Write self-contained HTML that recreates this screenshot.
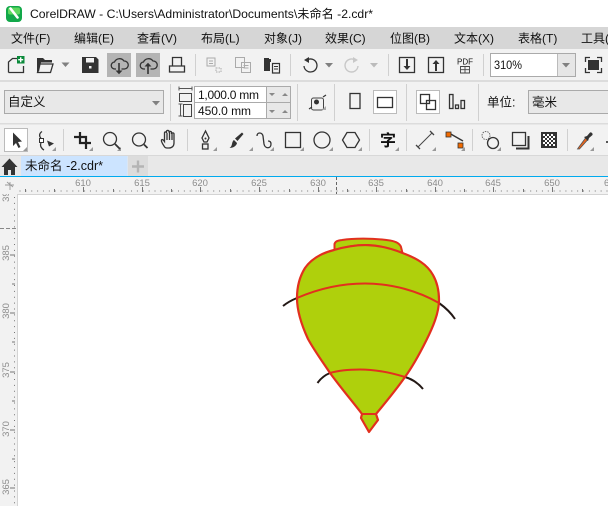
<!DOCTYPE html>
<html><head><meta charset="utf-8"><style>
html,body{margin:0;padding:0;width:608px;height:506px;overflow:hidden;background:#fff}
svg{position:absolute;left:0;top:0;display:block}
text{font-family:"Liberation Sans","Noto Sans CJK SC",sans-serif;fill:#111;font-size:12px}
.m{font-size:12px}
.r{font-size:9.5px;fill:#8c8c8c;text-anchor:middle}
.i{fill:none;stroke:#333;stroke-width:1.3}
.f{fill:#333;stroke:none}
.g{fill:none;stroke:#aaa;stroke-width:1}
.s{stroke:#d0d0d0;stroke-width:1}
</style></head><body>
<svg width="608" height="506" viewBox="0 0 608 506" shape-rendering="geometricPrecision">
<defs><clipPath id="vc"><rect x="0" y="194" width="17" height="312"/></clipPath></defs>
<rect width="608" height="27" fill="#fff"/>
<rect y="27" width="608" height="22" fill="#d6d6d6"/>
<rect y="49" width="608" height="31" fill="#f2f2f2"/>
<rect y="80" width="608" height="2" fill="#dcdcdc"/>
<rect y="82" width="608" height="41" fill="#f2f2f2"/>
<rect y="123" width="608" height="1.5" fill="#dcdcdc"/>
<rect y="124.5" width="608" height="30.5" fill="#f2f2f2"/>
<rect y="155" width="608" height="21" fill="#e8e8e8"/>
<rect y="155" width="608" height="1" fill="#d8d8d8"/>
<rect y="176" width="608" height="1.2" fill="#00aaee"/>
<rect y="177" width="608" height="17" fill="#f2f2f2"/>
<rect y="177" width="17" height="329" fill="#f2f2f2"/>
<rect x="17" y="194" width="591" height="1" fill="#d4d4d4"/>
<rect x="17" y="194" width="1" height="312" fill="#d4d4d4"/>

<!-- logo -->
<rect x="6" y="6" width="16" height="16" rx="4" fill="#12a84a"/>
<rect x="8" y="7.5" width="12" height="7" rx="2" fill="#5fd85f"/>
<path d="M10.5 8.500L17.500 17.500" stroke="#fff" stroke-width="2.600" stroke-linecap="round"/>
<text x="30" y="18" textLength="343" lengthAdjust="spacingAndGlyphs">CorelDRAW - C:\Users\Administrator\Documents\未命名 -2.cdr*</text>

<!-- menu -->
<text class="m" x="11" y="42.500">文件(F)</text>
<text class="m" x="74" y="42.500">编辑(E)</text>
<text class="m" x="137" y="42.500">查看(V)</text>
<text class="m" x="201" y="42.500">布局(L)</text>
<text class="m" x="264" y="42.500">对象(J)</text>
<text class="m" x="325" y="42.500">效果(C)</text>
<text class="m" x="390" y="42.500">位图(B)</text>
<text class="m" x="454" y="42.500">文本(X)</text>
<text class="m" x="518" y="42.500">表格(T)</text>
<text class="m" x="581" y="42.500">工具(O)</text>

<!-- toolbar 1 -->
<path class="i" d="M8.500 72.500V62L12.500 58.500H18M23.500 66V72.500H8.500"/>
<rect x="17" y="56" width="7.500" height="7.500" fill="#0a8a3a"/>
<path d="M20.700 57.200V62.300M18.200 59.700H23.200" stroke="#fff" stroke-width="1.400"/>
<path class="f" d="M37 58h6l2 2h7v2.500h-11l-2 9h-2z"/>
<path class="i" d="M39.500 64H53L50.500 72.500H37.500z"/>
<path d="M61.500 62.500h8l-4 4.500z" fill="#808080"/>
<path class="f" d="M82 57h14l2.500 2.500V73H82z"/>
<rect x="86" y="58" width="8" height="4.500" fill="#f2f2f2"/><rect x="89" y="66" width="2.500" height="2.500" fill="#f2f2f2"/>
<rect x="107" y="53" width="24" height="24" fill="#b4b4b4"/>
<rect x="136" y="53" width="24" height="24" fill="#b4b4b4"/>
<path class="i" d="M116 69h-1a3.500 3.500 0 0 1-.5-7a5.500 5.500 0 0 1 9.500-1a4 4 0 0 1 .5 8h-3"/>
<path class="f" d="M118.200 63h1.600v7.500h2.700l-3.500 3.800-3.500-3.800h2.700z"/>
<path class="i" d="M145 69h-1a3.500 3.500 0 0 1-.5-7a5.500 5.500 0 0 1 9.500-1a4 4 0 0 1 .5 8h-3"/>
<path class="f" d="M147.200 74h1.600v-7.500h2.700l-3.500-3.800-3.500 3.800h2.700z"/>
<path class="i" d="M172.500 66V57.500H181.500V66M169.500 66H184.500V72H169.500z"/>
<line class="s" x1="195.500" y1="54" x2="195.500" y2="76"/>
<path class="g" d="M207 58h8v8h-8zM209 61h4M209 63.500h4"/><path d="M216 68h5v4h-5z" fill="none" stroke="#aaa" stroke-dasharray="1.500 1"/>
<path class="g" d="M235.500 57.500h9v10h-9zM241.500 62.500h9v10h-9zM243.500 65.500h5M243.500 68h5"/>
<path class="f" d="M264 58h5v1h2v3h-1v9h-6z"/><path d="M272.500 63.500h7v9.500h-7z" fill="#f2f2f2" stroke="#333" stroke-width="1.200"/><path d="M274 66.500h4M274 69h4" stroke="#333"/>
<line class="s" x1="290.500" y1="54" x2="290.500" y2="76"/>
<path class="i" d="M307 60a6.500 6.500 0 1 1-3 6" stroke-width="1.400"/><path class="f" d="M304 60l5-3v6z"/>
<path d="M325 63h8l-4 4.500z" fill="#808080"/>
<path d="M355 60a6.500 6.500 0 1 0 3 6" fill="none" stroke="#c8c8c8" stroke-width="1.400"/><path d="M358 60l-5-3v6z" fill="#c8c8c8"/>
<path d="M370 63h8l-4 4.500z" fill="#bbb"/>
<line class="s" x1="388.500" y1="54" x2="388.500" y2="76"/>
<rect class="i" x="399.500" y="57.500" width="15" height="15"/><path class="f" d="M406 59h2v7h2.500l-3.500 4-3.500-4H406z"/>
<rect class="i" x="428.500" y="57.500" width="15" height="15"/><path class="f" d="M435 71h2v-7h2.500l-3.500-4-3.500 4H435z"/>
<text x="457" y="64.500" style="font-size:8px" textLength="16" lengthAdjust="spacingAndGlyphs">PDF</text>
<path d="M460.500 66.500h9v6.500h-9zM465 66.500v6.500M460.500 69.700h9" fill="none" stroke="#444" stroke-width=".9"/>
<line class="s" x1="483.500" y1="54" x2="483.500" y2="76"/>
<rect x="490.500" y="53.500" width="85" height="23" fill="#fff" stroke="#aaa"/>
<rect x="558" y="54" width="17" height="22" fill="#e6e6e6"/><line x1="557.500" y1="54" x2="557.500" y2="76" stroke="#bbb"/>
<path d="M562 63h8l-4 4.500z" fill="#808080"/>
<text x="494" y="69" textLength="28" lengthAdjust="spacingAndGlyphs">310%</text>
<path class="i" d="M585.500 62v-4.500H590M597 57.500h4.500V62M601.500 68v4.500H597M590 72.500h-4.500V68"/>
<rect x="588" y="60" width="11" height="10" class="f"/>

<!-- property bar -->
<rect x="4.500" y="90.500" width="159" height="23" fill="#e8e8e8" stroke="#aaa"/>
<text x="8" y="106" style="font-size:12.500px">自定义</text>
<path d="M152 101h8l-4 4.500z" fill="#808080"/>
<line class="s" x1="170.500" y1="84" x2="170.500" y2="121"/>
<path d="M179 88.500h13M179 86.500v4M192 86.500v4" fill="none" stroke="#555"/>
<rect x="179.500" y="93.500" width="12" height="8" fill="none" stroke="#444"/>
<path d="M180.500 104v12M178.500 104h4M178.500 116h4" fill="none" stroke="#555"/>
<rect x="183.500" y="104.500" width="8" height="12" fill="none" stroke="#444"/>
<rect x="194.500" y="86.500" width="96" height="16" fill="#e8e8e8" stroke="#aaa"/>
<rect x="194.500" y="102.500" width="96" height="16" fill="#e8e8e8" stroke="#aaa"/>
<rect x="194.500" y="86.500" width="72" height="16" fill="#fff" stroke="#aaa"/>
<rect x="194.500" y="102.500" width="72" height="16" fill="#fff" stroke="#aaa"/>
<text x="198" y="99" textLength="61">1,000.0 mm</text>
<text x="198" y="115" textLength="53">450.0 mm</text>
<path d="M269 93h6l-3 3zM282 96h6l-3-3zM269 110h6l-3 3zM282 113h6l-3-3z" fill="#888"/>
<line class="s" x1="297.500" y1="84" x2="297.500" y2="121"/>
<rect x="311.500" y="98" width="12" height="12" fill="none" stroke="#444" rx="2"/>
<circle cx="316.500" cy="102" r="2.500" class="f"/>
<path d="M309 109l3-2M323 97l3-2" stroke="#333" stroke-width="1.200"/>
<path d="M322 110h4v-4z" fill="#aaa"/>
<line class="s" x1="334.500" y1="84" x2="334.500" y2="121"/>
<rect class="i" x="350" y="93.500" width="10" height="15"/>
<rect x="373.500" y="90.500" width="23" height="23" fill="#fff" stroke="#bbb"/>
<rect class="i" x="377.500" y="97.500" width="15" height="10"/>
<line class="s" x1="406.500" y1="84" x2="406.500" y2="121"/>
<rect x="416.500" y="90.500" width="23" height="23" fill="#fff" stroke="#bbb"/>
<rect class="i" x="420.500" y="94.500" width="9" height="9"/><rect class="i" x="426.500" y="100.500" width="9" height="9"/>
<rect x="449.500" y="94.500" width="3.500" height="14" class="i"/><rect x="455.500" y="105" width="3" height="3.500" class="i"/><rect x="461" y="100.500" width="3.500" height="8" class="i"/>
<line class="s" x1="478.500" y1="84" x2="478.500" y2="121"/>
<text x="487" y="106.500" style="font-size:12.500px">单位:</text>
<rect x="528.500" y="90.500" width="90" height="23" fill="#e8e8e8" stroke="#aaa"/>
<text x="532" y="106.500" style="font-size:12.500px">毫米</text>

<!-- toolbox -->
<rect x="4.500" y="128.500" width="23" height="23" fill="#fff" stroke="#bbb"/>
<path class="f" d="M13 132.500l9 9-4 .5 2.500 5-2 1-2.500-5-3 3z"/>
<path d="M27 151v-4l-4 4zM56 151v-4l-4 4zM93 151v-4l-4 4zM121 151v-4l-4 4zM217 151v-4l-4 4zM253 151v-4l-4 4zM274 151v-4l-4 4zM304 151v-4l-4 4zM333 151v-4l-4 4zM362 151v-4l-4 4zM399 151v-4l-4 4zM436 151v-4l-4 4zM465 151v-4l-4 4zM501 151v-4l-4 4zM594 151v-4l-4 4z" fill="#999"/>
<path class="i" d="M42 131.500c-3 2-3 5-1 6.500M41 143c-1.500 3 1 6 3 7"/>
<rect x="39.500" y="138.500" width="4" height="4" fill="#fff" stroke="#333"/>
<path class="f" d="M47 140.500l7 3-5 3z"/>
<line class="s" x1="63.500" y1="129" x2="63.500" y2="151"/>
<path d="M80 132v11h11M74 137h12v12" fill="none" stroke="#222" stroke-width="2.200"/>
<circle class="i" cx="110" cy="139" r="6.500"/><path d="M115 144l5 5" stroke="#333" stroke-width="1.800"/>
<circle class="i" cx="139" cy="139.500" r="6.500"/><path d="M144 144.500l3.500 3.500" stroke="#333" stroke-width="1.800"/>
<path class="i" d="M164 146c-2-3-3-5-2.500-6 .7-1 2 0 3 1.500V133c0-1.500 2-1.500 2 0v-1.500c0-1.500 2.500-1.500 2.500 0v1c0-1.500 2.500-1.500 2.500 0v1.500c0-1.500 2.500-1.500 2.500 0v9c0 3-2 5-5 5h-2c-1.500 0-2.500-1-3-2zM167 133v7M169.500 132v8M172 133v7"/>
<line class="s" x1="187.500" y1="129" x2="187.500" y2="151"/>
<path class="i" d="M205.500 131l-3.500 7 2 4h3l2-4z"/><rect class="i" x="202.500" y="144" width="5.500" height="5"/><circle cx="205.500" cy="138.500" r="1" class="f"/>
<path class="f" d="M242 132.500l1.500 1.500-6 7-2.500-2.500zM234 140l3 3c-.5 3-4 5-7.500 5 1.500-1 2-2 2.500-4 .3-2 1-3.500 2-4z"/>
<path class="i" d="M257 136c0-4 5-4 6 0l1 8c1 5 7 5 7 0 0-2-1-3-3-3" stroke-width="1.600"/>
<rect class="i" x="285.500" y="132.500" width="15" height="15"/>
<circle class="i" cx="322" cy="140" r="8"/>
<path class="i" d="M347 132.500h8l4.500 7.500-4.500 7.500h-8l-4.500-7.500z"/>
<line class="s" x1="369.500" y1="129" x2="369.500" y2="151"/>
<text x="380" y="146" style="font-size:16px;font-weight:bold">字</text>
<line class="s" x1="406.500" y1="129" x2="406.500" y2="151"/>
<path d="M418 147l14-14" stroke="#444" stroke-width="1"/><path d="M416 145l4 4M430 131l4 4" stroke="#444" stroke-width="1.300"/>
<path d="M449 133l14 8" stroke="#333" stroke-width="1.400"/><rect x="446" y="132" width="5" height="5" fill="#f26a00" stroke="#333" stroke-width=".8"/><rect x="458" y="143" width="5" height="5" fill="#f26a00" stroke="#333" stroke-width=".8"/>
<line class="s" x1="472.500" y1="129" x2="472.500" y2="151"/>
<circle cx="486" cy="135.500" r="4" fill="none" stroke="#666" stroke-dasharray="1.500 1"/><circle class="i" cx="493" cy="143" r="5.500"/>
<rect class="i" x="512.500" y="132.500" width="13" height="13"/><path d="M516 148.500h12.500V136" fill="none" stroke="#333" stroke-width="2"/>
<rect x="541" y="132" width="16" height="16" class="f"/>
<path d="M543 134h2v2h-2zM547 134h2v2h-2zM551 134h2v2h-2zM545 136h2v2h-2zM549 136h2v2h-2zM553 136h2v2h-2zM543 138h2v2h-2zM547 138h2v2h-2zM551 138h2v2h-2zM545 140h2v2h-2zM549 140h2v2h-2zM553 140h2v2h-2zM543 142h2v2h-2zM547 142h2v2h-2zM551 142h2v2h-2zM545 144h2v2h-2zM549 144h2v2h-2zM553 144h2v2h-2z" fill="#fff"/>
<line class="s" x1="567.500" y1="129" x2="567.500" y2="151"/>
<path d="M578.500 147.500l-1 1.500 2 0 8-9-2-2z" fill="#e8641c" stroke="#555" stroke-width=".8"/>
<path class="f" d="M584 137l3-1 3-3.500c1.500-.5 3 1 2.500 2.500l-3.500 3-1 3z"/>
<path d="M606 141h2v2h-2z" fill="#555"/>

<!-- tabs -->
<path class="f" d="M9.500 158.500L1.500 167h2.500v8h4v-5h3v5h4v-8h2.500z"/>
<rect x="21" y="156" width="106.500" height="20" fill="#cce4ff"/>
<text x="25" y="170" style="font-size:12.500px" textLength="78">未命名 -2.cdr*</text>
<rect x="128" y="156" width="20" height="20" fill="#dcdcdc"/>
<path d="M132 166.500h12M138 160.500v12" stroke="#b4b4b4" stroke-width="2.400"/>

<!-- ruler -->
<text class="r" x="83" y="186">610</text><text class="r" x="142" y="186">615</text><text class="r" x="200" y="186">620</text><text class="r" x="259" y="186">625</text><text class="r" x="318" y="186">630</text><text class="r" x="376" y="186">635</text><text class="r" x="435" y="186">640</text><text class="r" x="493" y="186">645</text><text class="r" x="552" y="186">650</text><text class="r" x="604" y="186" style="text-anchor:start">6</text>
<line x1="19.500" y1="191" x2="608" y2="191" stroke="#777" stroke-dasharray="1 4.870"/>
<path d="M83.500 187v5M142.500 187v5M200.500 187v5M259.500 187v5M318.500 187v5M376.500 187v5M435.500 187v5M493.500 187v5M552.500 187v5M25.500 189v3M54.500 189v3M113.500 189v3M171.500 189v3M230.500 189v3M289.500 189v3M347.500 189v3M406.500 189v3M464.500 189v3M523.500 189v3M582.500 189v3" stroke="#777" fill="none"/>
<line x1="336.500" y1="177" x2="336.500" y2="194" stroke="#666" stroke-dasharray="3 2"/>
<line x1="14.500" y1="197" x2="14.500" y2="506" stroke="#777" stroke-dasharray="1 4.870"/>
<path d="M10 255h5M10 313h5M10 372h5M10 430h5M10 488h5M12 284h3M12 342h3M12 401h3M12 459h3" stroke="#777" fill="none"/>
<line x1="0" y1="228.500" x2="17" y2="228.500" stroke="#888" stroke-dasharray="4 2"/>
<g>
<text class="r" transform="translate(9,253) rotate(-90)">385</text>
<text class="r" transform="translate(9,311) rotate(-90)">380</text>
<text class="r" transform="translate(9,370) rotate(-90)">375</text>
<text class="r" transform="translate(9,429) rotate(-90)">370</text>
<text class="r" transform="translate(9,487) rotate(-90)">365</text>
</g>
<g clip-path="url(#vc)"><text class="r" transform="translate(9,194) rotate(-90)">390</text></g>
<path d="M7 182l6 5M10 182v8M5 185h9" stroke="#999" fill="none" stroke-width=".9"/>

<!-- drawing -->
<path d="M283 306C288 302 292 300 297 298M439 303C446 308 451 313 455 319M317.500 383C321 378 325 375 330 373M405 377C412 379 418 383 423 389" fill="none" stroke="#231815" stroke-width="2"/>
<path d="M334.500 250V244C335.500 241 338 240.500 342 240C352 238.500 372 237.800 390 240.500C396 241.500 400 244 401 247L402.500 253C376 243 358 243 334.500 250Z" fill="#afd00c" stroke="#e2301e" stroke-width="2" stroke-linejoin="round"/>
<path d="M334 250C358 243 378 243 402.500 253C416 258 427 264 433 275C437 282 439 291 439 300C439 313 433 327 426 341C420 353 413 366 405 377C396 390 386 402 376 414L378 420L369 432L361 418L362 414C352 401 341 388 330 373C322 361 314 350 308 339C302 326 297 312 297 298C297 285 300 276 305 268C312 258 322 253 334 250Z" fill="#afd00c" stroke="#e2301e" stroke-width="2.200" stroke-linejoin="round"/>
<path d="M297 298C320 288 342 283.500 365 283.500C392 283.500 418 291 439 303" fill="none" stroke="#e2301e" stroke-width="2"/>
<path d="M330 373C340 370 350 369.500 360 369.500C376 369.500 392 373 405 377" fill="none" stroke="#e2301e" stroke-width="2"/>
<path d="M362 414H376" fill="none" stroke="#e2301e" stroke-width="2"/>
</svg>
</body></html>
